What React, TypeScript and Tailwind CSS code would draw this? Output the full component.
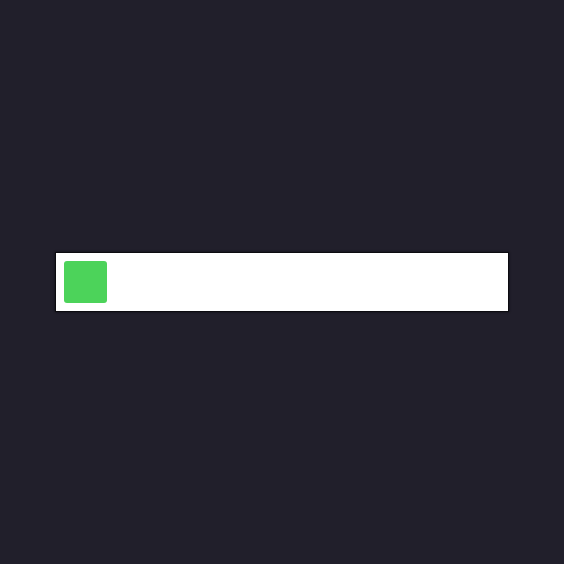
export default function App() {
  return (
    <div className="flex h-screen w-full items-center justify-center bg-[#211f2b]">
      <div className="flex h-[60px] w-[454px] items-center border border-[#0c0b10] bg-white pl-[8px] shadow-[0_0_2px_#0c0b10]">
        <div className="h-[42px] w-[43px] rounded-[3px] bg-[#4cd35a]" />
      </div>
    </div>
  );
}
